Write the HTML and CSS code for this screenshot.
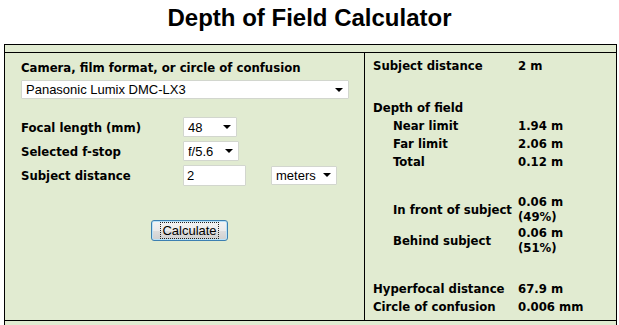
FILE: index.html
```html
<!DOCTYPE html>
<html>
  <head>
    <meta charset="UTF-8" />
    <title>Depth of Field Calculator</title>
    <link rel="stylesheet" href="styles.css">
  </head>
  <body>
    <h1 class="title">Depth of Field Calculator</h1>

    <div class="frame">
      <div class="strip"></div>

      <div class="main">

        <div class="inputs">
          <div class="camera-label">Camera, film format, or circle of confusion</div>
          <span class="pick wide">
            <select id="camera">
              <option>Panasonic Lumix DMC-LX3</option>
            </select>
          </span>

          <div class="fields">
            <div class="field">
              <label for="focal">Focal length (mm)</label>
              <span class="pick focal">
                <select id="focal"><option>48</option></select>
              </span>
            </div>
            <div class="field">
              <label for="fstop">Selected f-stop</label>
              <span class="pick fstop">
                <select id="fstop"><option>f/5.6</option></select>
              </span>
            </div>
            <div class="field">
              <label for="distance">Subject distance</label>
              <input type="text" id="distance" value="2" />
              <span class="pick units">
                <select id="units"><option>meters</option></select>
              </span>
            </div>
          </div>

          <div class="actions">
            <button class="calc"><span>Calculate</span></button>
          </div>
        </div>

        <div class="results">
          <div class="row">
            <span>Subject distance</span>
            <span>2 m</span>
          </div>

          <div class="row group">
            <span>Depth of field</span>
            <span></span>
          </div>
          <div class="row">
            <span class="indent">Near limit</span>
            <span>1.94 m</span>
          </div>
          <div class="row">
            <span class="indent">Far limit</span>
            <span>2.06 m</span>
          </div>
          <div class="row">
            <span class="indent">Total</span>
            <span>0.12 m</span>
          </div>

          <div class="row split front">
            <span class="indent">In front of subject</span>
            <span>0.06 m<br>(49%)</span>
          </div>
          <div class="row split behind">
            <span class="indent">Behind subject</span>
            <span>0.06 m<br>(51%)</span>
          </div>

          <div class="row group hyper">
            <span>Hyperfocal distance</span>
            <span>67.9 m</span>
          </div>
          <div class="row">
            <span>Circle of confusion</span>
            <span>0.006 mm</span>
          </div>
        </div>

      </div>

      <div class="strip bottom"></div>
    </div>
  </body>
</html>
```

FILE: styles.css
```css
* {
  box-sizing: border-box;
}

html {
  overflow: hidden;
}

body {
  margin: 0;
  background-color: #fff;
  color: #000;
  font-family: "DejaVu Sans Condensed", "DejaVu Sans", sans-serif;
  font-stretch: condensed;
  font-weight: bold;
  font-size: 13px;
}

.title {
  margin: 4px 0 12px;
  font-family: "Liberation Sans", Arial, sans-serif;
  font-stretch: normal;
  font-size: 24px;
  line-height: 28px;
  text-align: center;
}

.frame {
  margin-left: 4px;
  width: 613px;
  border: 1px solid #000;
  background-color: #e1ebd1;
}

.strip {
  height: 8px;
  border-bottom: 1px solid #000;
}

.strip.bottom {
  height: 20px;
  border-bottom: none;
}

.main {
  display: grid;
  grid-template-columns: 360px 1fr;
  height: 268px;
  border-bottom: 1px solid #000;
}

/* left side: the form */

.inputs {
  border-right: 1px solid #000;
  padding: 7px 0 0 16px;
}

.camera-label {
  line-height: 16px;
  margin-bottom: 4px;
}

.pick {
  position: relative;
  display: inline-block;
}

.pick::after {
  content: "";
  position: absolute;
  right: 6px;
  top: 50%;
  margin-top: -2px;
  border-left: 4px solid transparent;
  border-right: 4px solid transparent;
  border-top: 4px solid #000;
  pointer-events: none;
}

.pick select,
.field input[type="text"] {
  -webkit-appearance: none;
  appearance: none;
  display: block;
  margin: 0;
  border: 1px solid #d2d6ce;
  border-radius: 1px;
  background-color: #fff;
  color: #000;
  font-family: "Liberation Sans", Arial, sans-serif;
  font-stretch: normal;
  font-weight: normal;
  font-size: 13px;
  padding: 0 0 0 4px;
  outline: none;
}

.pick.wide select {
  width: 328px;
  height: 19px;
}

.pick.focal select {
  width: 54px;
  height: 20px;
}

.pick.fstop select {
  width: 56px;
  height: 20px;
}

.pick.units select {
  width: 66px;
  height: 19px;
}

.fields {
  display: flex;
  flex-direction: column;
  gap: 4px;
  margin-top: 18px;
}

.field {
  display: flex;
  align-items: center;
  height: 20px;
}

.field label {
  width: 162px;
}

.field input[type="text"] {
  width: 63px;
  height: 21px;
  padding-left: 3px;
}

.pick.units {
  margin-left: 25px;
}

.actions {
  margin-top: 35px;
  padding-left: 130px;
}

.calc {
  width: 77px;
  height: 21px;
  padding: 0;
  border: 1px solid #3c7fb1;
  border-radius: 3px;
  background: linear-gradient(#f4f4f4, #ebebeb 50%, #dddddd 51%, #cfcfcf);
  box-shadow: inset 0 0 0 1px #b9e2f8;
  color: #000;
  font-family: "Liberation Sans", Arial, sans-serif;
  font-stretch: normal;
  font-weight: normal;
  font-size: 13px;
  cursor: pointer;
}

.calc span {
  display: inline-block;
  border: 1px dotted #222;
  padding: 0 1px;
  line-height: 15px;
}

/* right side: the results */

.results {
  padding: 3px 0 0 8px;
}

.row {
  display: grid;
  grid-template-columns: 145px auto;
  align-items: center;
  height: 18px;
  white-space: nowrap;
}

.row.group {
  margin-top: 24px;
}

.row.hyper {
  margin-top: 24px;
}

.row .indent {
  padding-left: 20px;
}

.row.split {
  height: 30px;
  line-height: 15px;
}

.row.front {
  margin-top: 24px;
}

.row.behind {
  margin-top: 1px;
}
```
